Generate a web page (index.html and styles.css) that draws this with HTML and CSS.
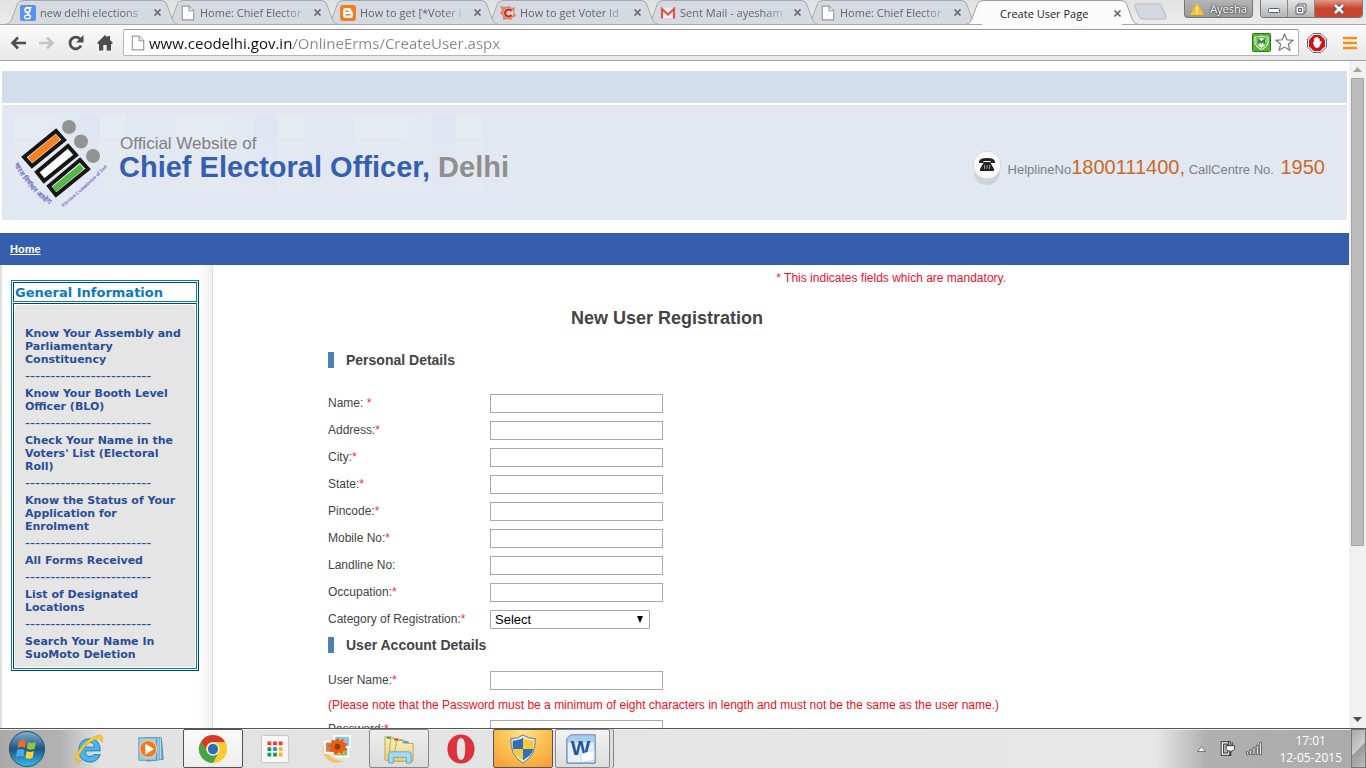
FILE: index.html
```html
<!DOCTYPE html>
<html lang="en">
<head>
    <meta charset="UTF-8">
    <meta name="viewport" content="width=device-width, initial-scale=1.0">
    <title>Create User Page</title>
    <link rel="stylesheet" href="styles.css">
</head>
<body>

    <!-- shared shapes -->
    <svg class="defs" aria-hidden="true">
        <symbol id="edge" viewBox="0 0 16 24">
            <path class="fill" d="M0 24C4 24 5 21 6.500 17L11 5C12 2 13 1 16 1V24Z"/>
            <path class="line" d="M0 24C4 24 5 21 6.500 17L11 5C12 2 13 1 16 1"/>
        </symbol>
        <symbol id="page" viewBox="0 0 12 14">
            <path d="M1 1H7L11 5V13H1Z" fill="#fff" stroke="#999"/>
            <path d="M7 1V5H11" fill="#eee" stroke="#999"/>
        </symbol>
        <symbol id="cross" viewBox="0 0 9 9">
            <path d="M1.500 1.500L7.500 7.500M7.500 1.500L1.500 7.500" stroke="#666" stroke-width="1.700" fill="none"/>
        </symbol>
        <linearGradient id="orbFill" x1="0" y1="0" x2="0" y2="1">
            <stop offset="0" stop-color="#7fb0cc"/><stop offset=".5" stop-color="#1d5584"/><stop offset="1" stop-color="#35c0ee"/>
        </linearGradient>
        <linearGradient id="folder" x1="0" y1="0" x2="0" y2="1">
            <stop offset="0" stop-color="#fbf0b8"/><stop offset="1" stop-color="#e8cc72"/>
        </linearGradient>
    </svg>

    <div class="tabstrip">
        <div class="tab">
            <svg class="edge"><use href="#edge"/></svg>
            <div class="tab-body">
                <svg class="favicon" viewBox="0 0 16 16"><rect width="16" height="16" rx="2" fill="#5a92f0"/><circle cx="7.500" cy="5" r="2.400" fill="none" stroke="#fff" stroke-width="1.600"/><path d="M9 3L11.500 2.500M8 7.500C6 9 10.500 9 10.500 11.500C10.500 14.500 4.500 14.500 4.500 12C4.500 10 8 10 9 10" fill="none" stroke="#fff" stroke-width="1.400"/></svg>
                <span>new delhi elections</span>
                <button aria-label="Close tab"><svg><use href="#cross"/></svg></button>
            </div>
            <svg class="edge right"><use href="#edge"/></svg>
        </div>
        <div class="tab">
            <svg class="edge"><use href="#edge"/></svg>
            <div class="tab-body">
                <svg class="favicon"><use href="#page"/></svg>
                <span>Home: Chief Elector</span>
                <button aria-label="Close tab"><svg><use href="#cross"/></svg></button>
            </div>
            <svg class="edge right"><use href="#edge"/></svg>
        </div>
        <div class="tab">
            <svg class="edge"><use href="#edge"/></svg>
            <div class="tab-body">
                <svg class="favicon" viewBox="0 0 16 16"><rect width="16" height="16" rx="3" fill="#f57d20"/><path d="M6 3H8.500A3 3 0 0 1 11.500 6C11.500 7 13 6.500 13 8V10A3 3 0 0 1 10 13H6A3 3 0 0 1 3 10V6A3 3 0 0 1 6 3Z" fill="#fff"/><path d="M6 6.200H8.300M6 9.800H10" stroke="#f57d20" stroke-width="1.500" stroke-linecap="round"/></svg>
                <span>How to get [*Voter i</span>
                <button aria-label="Close tab"><svg><use href="#cross"/></svg></button>
            </div>
            <svg class="edge right"><use href="#edge"/></svg>
        </div>
        <div class="tab">
            <svg class="edge"><use href="#edge"/></svg>
            <div class="tab-body">
                <svg class="favicon" viewBox="0 0 16 16"><path d="M0 1L5 2L9 1L12 3L15 2L14 7L16 11L12 13L11 15L7 14L3 15L3 11L0 8L2 5Z" fill="#cf8a68"/><circle cx="8.500" cy="8" r="5" fill="#f3cfc4"/><path d="M11.500 6A3.500 3.500 0 1 0 11.500 10" fill="none" stroke="#d4202c" stroke-width="2.200"/></svg>
                <span>How to get Voter Id</span>
                <button aria-label="Close tab"><svg><use href="#cross"/></svg></button>
            </div>
            <svg class="edge right"><use href="#edge"/></svg>
        </div>
        <div class="tab">
            <svg class="edge"><use href="#edge"/></svg>
            <div class="tab-body">
                <svg class="favicon" viewBox="0 0 16 16"><path d="M1 3H15V13H1Z" fill="#f4eeee"/><path d="M2 13.500V4L8 9.500L14 4V13.500" fill="none" stroke="#d9574c" stroke-width="2.200"/></svg>
                <span>Sent Mail - ayesham</span>
                <button aria-label="Close tab"><svg><use href="#cross"/></svg></button>
            </div>
            <svg class="edge right"><use href="#edge"/></svg>
        </div>
        <div class="tab">
            <svg class="edge"><use href="#edge"/></svg>
            <div class="tab-body">
                <svg class="favicon"><use href="#page"/></svg>
                <span>Home: Chief Elector</span>
                <button aria-label="Close tab"><svg><use href="#cross"/></svg></button>
            </div>
            <svg class="edge right"><use href="#edge"/></svg>
        </div>
        <div class="tab active">
            <svg class="edge"><use href="#edge"/></svg>
            <div class="tab-body">
                <i class="favicon"></i>
                <span>Create User Page</span>
                <button aria-label="Close tab"><svg><use href="#cross"/></svg></button>
            </div>
            <svg class="edge right"><use href="#edge"/></svg>
        </div>
        <button class="new-tab" aria-label="New tab"><svg viewBox="0 0 34 18"><path d="M4 1H24Q27 1 28 4L32 14Q33 16 30 16H9Q6 16 5 13L1 4Q0 1 4 1Z" fill="#d3d9e2" stroke="#b4b8be"/></svg></button>
        <div class="window-buttons">
            <button class="user"><svg viewBox="0 0 14 12"><path d="M7 0L14 12H0Z" fill="#fcc419"/><path d="M7 4V8M7 9V10.500" stroke="#fff" stroke-width="1.500"/></svg>Ayesha</button>
            <div class="controls">
                <button aria-label="Minimize"><svg viewBox="0 0 14 12"><rect x="1.500" y="5.500" width="11" height="4" rx="1" fill="#fff" stroke="#555a70"/></svg></button>
                <button aria-label="Restore"><svg viewBox="0 0 14 12"><path d="M4 1H12V9H4Z" fill="#fff" stroke="#555a70"/><path d="M2 3H10V11H2Z" fill="#fff" stroke="#555a70"/><path d="M4.500 5.500H7.500V8.500H4.500Z" fill="#ddd" stroke="#555a70"/></svg></button>
                <button class="close" aria-label="Close"><svg viewBox="0 0 14 12"><path d="M3 2L11 10M11 2L3 10" stroke="#5a4a56" stroke-width="4.500"/><path d="M3 2L11 10M11 2L3 10" stroke="#fff" stroke-width="2.500"/></svg></button>
            </div>
        </div>
    </div>

    <div class="toolbar">
        <button aria-label="Back"><svg viewBox="0 0 16 16"><path d="M16 8H3M8 2.500L2.500 8L8 13.500" fill="none" stroke="#4d4d4d" stroke-width="2.600"/></svg></button>
        <button aria-label="Forward"><svg viewBox="0 0 16 16"><path d="M0 8H13M8 2.500L13.500 8L8 13.500" fill="none" stroke="#c4c4c4" stroke-width="2.600"/></svg></button>
        <button aria-label="Reload"><svg viewBox="0 0 16 16"><path d="M13 10.500A5.800 5.800 0 1 1 12 4" fill="none" stroke="#4d4d4d" stroke-width="2.800"/><path d="M15.500 0V7.500H8Z" fill="#4d4d4d"/></svg></button>
        <button aria-label="Home"><svg viewBox="0 0 16 16"><path d="M8 0L10.500 2.500V1H13V5L16 8L14.500 9.300L14 8.900V15.500H9.700V10H6.300V15.500H2V8.900L1.500 9.300L0 8Z" fill="#4d4d4d"/></svg></button>
        <div class="omnibox">
            <svg class="page-icon"><use href="#page"/></svg>
            <input type="text" aria-label="Address" value="www.ceodelhi.gov.in/OnlineErms/CreateUser.aspx">
            <svg class="badge" viewBox="0 0 19 19"><rect x=".5" y=".5" width="18" height="18" rx="1" fill="#53b727" stroke="#237a20"/><path d="M2.500 3.500Q7 4 9.500 2.500Q12 4 16.500 3.500V10Q15 14.500 9.500 17Q4 14.500 2.500 10Z" fill="#fff"/><path d="M4 5Q7 5.200 9.500 4Q12 5.200 15 5V10Q14 13.500 9.500 15.500Q5 13.500 4 10Z" fill="#e4f3dc" stroke="#3a9a2b"/><path d="M6.500 11.500V7L9.500 9.500L12.500 7V11.500" fill="none" stroke="#2b8a22" stroke-width="2"/></svg>
            <svg class="badge" viewBox="0 0 19 19"><path d="M9.500 1.200L11.900 6.800L18 7.300L13.400 11.300L14.800 17.300L9.500 14.100L4.200 17.300L5.600 11.300L1 7.300L7.100 6.800Z" fill="#fff" stroke="#777" stroke-width="1.200"/></svg>
        </div>
        <button class="stop" aria-label="Ad blocker"><svg viewBox="0 0 20 20"><path d="M6 .5H14L19.500 6V14L14 19.500H6L.5 14V6Z" fill="#fff" stroke="#666"/><path d="M6.700 2H13.300L18 6.700V13.300L13.300 18H6.700L2 13.300V6.700Z" fill="#d6101a"/><path d="M6 9Q6 8 7 9V5.500Q7.600 4.500 8.200 5.500V4.500Q9 3.500 9.800 4.500Q10.600 3.700 11.300 4.800V5.800Q12.500 5 12.800 6.500V9Q14 7.500 14.800 8.500L12.500 13.500Q11.500 15 9.500 15Q6.500 14 6 9Z" fill="#fff"/></svg></button>
        <button class="menu" aria-label="Menu"><svg viewBox="0 0 14 14"><path d="M0 2H14M0 7H14M0 12H14" stroke="#f0911e" stroke-width="2.600"/></svg></button>
    </div>

    <div class="viewport">
        <div class="site">
            <div class="top-band"></div>
            <header>
                <div class="brand">
                    <svg class="emblem" viewBox="0 0 94 90">
                        <g fill="#939393"><circle cx="56" cy="9" r="7"/><circle cx="68" cy="23.500" r="7"/><circle cx="80" cy="38" r="7"/></g>
                        <g stroke="#151515" stroke-width="4">
                            <path d="M11 39L43 13L51 22L19 48Z" fill="#fff"/>
                            <path d="M24 54L55 28L63 37L31 63Z" fill="#fff"/>
                            <path d="M36 68L67 42L75 51L43 77Z" fill="#fff"/>
                        </g>
                        <path d="M15 39L43 16L47 22L19 45Z" fill="#f58220"/>
                        <path d="M39 69L67 46L71 51L43 74Z" fill="#4fb848"/>
                        <defs>
                            <path id="leftText" d="M1 46Q14 72 38 88"/>
                            <path id="rightText" d="M50 89Q70 73 93 50"/>
                        </defs>
                        <g class="emblem-text"><text class="hindi"><textPath href="#leftText">भारत निर्वाचन आयोग</textPath></text>
                        <text><textPath href="#rightText">Election Commission of India</textPath></text></g>
                    </svg>
                    <div class="brand-text">
                        <p>Official Website of</p>
                        <h1>Chief Electoral Officer, <span>Delhi</span></h1>
                    </div>
                </div>
                <div class="helpline">
                    <svg viewBox="0 0 30 36"><ellipse cx="15" cy="22" rx="13" ry="13" fill="#cfd2d6"/><circle cx="15" cy="15" r="14" fill="#f8f8f8" stroke="#d3d5d8"/><path d="M7 12Q7 8 15 8Q23 8 23 12V13H18.500V11H11.500V13H7Z" fill="#222"/><path d="M12 12H18L22 19V21H8V19Z" fill="#222"/><path d="M12.500 15V19M15 15V19M17.500 15V19" stroke="#999"/></svg>
                    <p>HelplineNo<b>1800111400,</b> CallCentre No. <b class="last">1950</b></p>
                </div>
            </header>
            <nav><a href="#">Home</a></nav>

            <div class="columns">
                <aside>
                    <div class="info-box">
                        <h2>General Information</h2>
                        <div class="info-cell">
                            <ul>
                                <li><a href="#">Know Your Assembly and Parliamentary Constituency</a></li>
                                <li class="dash">-------------------------</li>
                                <li><a href="#">Know Your Booth Level Officer (BLO)</a></li>
                                <li class="dash">-------------------------</li>
                                <li><a href="#">Check Your Name in the Voters' List (Electoral Roll)</a></li>
                                <li class="dash">-------------------------</li>
                                <li><a href="#">Know the Status of Your Application for Enrolment</a></li>
                                <li class="dash">-------------------------</li>
                                <li><a href="#">All Forms Received</a></li>
                                <li class="dash">-------------------------</li>
                                <li><a href="#">List of Designated Locations</a></li>
                                <li class="dash">-------------------------</li>
                                <li><a href="#">Search Your Name In SuoMoto Deletion</a></li>
                            </ul>
                        </div>
                    </div>
                </aside>

                <main>
                    <form>
                        <p class="mandatory"><em>*</em> This indicates fields which are mandatory.</p>
                        <h2>New User Registration</h2>
                        <h3>Personal Details</h3>
                        <div class="fields">
                            <label for="name">Name: <em>*</em></label><input type="text" id="name">
                            <label for="address">Address:<em>*</em></label><input type="text" id="address">
                            <label for="city">City:<em>*</em></label><input type="text" id="city">
                            <label for="state">State:<em>*</em></label><input type="text" id="state">
                            <label for="pincode">Pincode:<em>*</em></label><input type="text" id="pincode">
                            <label for="mobile">Mobile No:<em>*</em></label><input type="text" id="mobile">
                            <label for="landline">Landline No:</label><input type="text" id="landline">
                            <label for="occupation">Occupation:<em>*</em></label><input type="text" id="occupation">
                            <label for="category">Category of Registration:<em>*</em></label>
                            <select id="category"><option>Select</option></select>
                        </div>
                        <h3 class="account">User Account Details</h3>
                        <div class="fields">
                            <label for="username">User Name:<em>*</em></label><input type="text" id="username">
                        </div>
                        <p class="note">(Please note that the Password must be a minimum of eight characters in length and must not be the same as the user name.)</p>
                        <div class="fields">
                            <label for="password">Password:<em>*</em></label><input type="password" id="password">
                        </div>
                    </form>
                </main>
            </div>
        </div>
        <div class="scrollbar">
            <svg viewBox="0 0 9 5"><path d="M4.500 0L9 5H0Z" fill="#a3a3a3"/></svg>
            <div class="track"><div class="thumb"></div></div>
            <svg viewBox="0 0 9 5"><path d="M0 0H9L4.500 5Z" fill="#505050"/></svg>
        </div>
    </div>

    <footer class="taskbar">
        <button class="start" aria-label="Start"><svg viewBox="0 0 38 38"><circle cx="19" cy="19" r="17.500" fill="url(#orbFill)" stroke="#254e6a"/><path d="M11 11Q14 9 18 11L17 18Q13 16 9.500 18Z" fill="#ee6a2c"/><path d="M20 12Q24 14 28 12L26.500 19Q23 20.500 18.800 18.800Z" fill="#91c83e"/><path d="M9 20Q13 18 16.500 20L15.500 27Q12 25 8 27Z" fill="#4ea8e8"/><path d="M18.500 21Q22 23 26 21L24.500 28Q21 29.500 17.500 28Z" fill="#fcd02f"/></svg></button>
        <button aria-label="Internet Explorer"><svg viewBox="0 0 32 32"><path d="M28 18H12Q12 24 17 24Q20 24 21 22H28Q25 30 17 30Q5 29 5 17Q6 5 17 5Q28 5 28 18ZM12 14H22Q21 9 17 9Q13 9 12 14Z" fill="#4ab6ec" stroke="#2279b8" fill-rule="evenodd"/><path d="M4 31Q-3 27 7 15Q17 2 28 1Q32 2 30 9Q28 3 20 7Q9 13 4 26Q3 30 8 28Q6 31 4 31Z" fill="#fbc82b" stroke="#d69c14" stroke-width=".5"/></svg></button>
        <button aria-label="Media Player"><svg viewBox="0 0 32 32"><path d="M10 4H27L29 27L12 29Z" fill="#76aed0" stroke="#4a85ac"/><path d="M23.500 4V28M26 4V27" stroke="#c5e3f3"/><path d="M3 4H22V28H3Z" fill="#9fcbe3" stroke="#5c97bc"/><circle cx="13" cy="16" r="9" fill="#f27a1c" stroke="#fbd4b0"/><path d="M10 10V22L19 16Z" fill="#fff"/></svg></button>
        <button class="open" aria-label="Chrome"><svg viewBox="0 0 32 32"><circle cx="16" cy="16" r="15" fill="#fbca2d"/><path d="M3 8.500A15 15 0 0 1 29 8.500H16A7 7 0 0 0 10 19.500Z" fill="#d63a2c"/><path d="M3 8.500A15 15 0 0 0 16 31L22 19.500A7 7 0 0 1 10 19.500Z" fill="#45a447"/><circle cx="16" cy="16" r="7" fill="#f4f4f4"/><circle cx="16" cy="16" r="5.500" fill="#2e6fb8"/></svg></button>
        <button aria-label="App Launcher"><svg viewBox="0 0 32 32"><rect x="1.500" y="1.500" width="29" height="29" rx="2" fill="#f7f7f7" stroke="#c2c2c2"/><path d="M8 8h4v4h-4zM14 8h4v4h-4zM20 8h4v4h-4z" fill="#e8402f"/><path d="M8 14h4v4h-4zM8 20h4v4h-4zM14 20h4v4h-4z" fill="#119a57"/><path d="M14 14h4v4h-4z" fill="#3280e8"/><path d="M20 14h4v4h-4zM20 20h4v4h-4z" fill="#fbb416"/></svg></button>
        <button aria-label="Photo Gallery"><svg viewBox="0 0 32 32"><path d="M3 9Q-3 20 7 28Q15 33 23 29Q10 28 5 19Q3 13 6 8Z" fill="#f6c168"/><path d="M13 2H30V14H13Z" fill="#8fc3e8" stroke="#fff" stroke-width="2"/><path d="M14 14H28V24H14Z" fill="#8fbf62" stroke="#fff" stroke-width="2"/><path d="M3 8H22V20H3Z" fill="#b98a62" stroke="#fff" stroke-width="2"/><path d="M17 4L19 7L23 5L23 9L27 10L25 14L27 17L23 18L22 22L18 20L14 23L12 19L8 19L9 15L6 12L10 10L10 6L14 7Z" fill="#e85f12"/><circle cx="16.500" cy="13.500" r="3" fill="#8e3811"/></svg></button>
        <button class="open dim" aria-label="Explorer"><svg viewBox="0 0 32 32"><path d="M1 3H9L11 6H20V28H1Z" fill="url(#folder)" stroke="#bea55a"/><path d="M7 5H16L18 8H26V29H5Z" fill="url(#folder)" stroke="#bea55a"/><path d="M14 7H22L24 10H31V29H9Z" fill="url(#folder)" stroke="#bea55a"/><path d="M3 4H7" stroke="#35a13f" stroke-width="2"/><path d="M11 6H15" stroke="#ce4026" stroke-width="2"/><path d="M20 9H25" stroke="#359bd8" stroke-width="2"/><path d="M5 21Q5 19 8 19H26Q29 19 29 21V31H24V25H10V31H5Z" fill="#a6d8ef" stroke="#5fa7ca"/></svg></button>
        <button aria-label="Opera"><svg viewBox="0 0 32 32"><path d="M16 1C25 1 30 8 30 16S25 31 16 31S2 24 2 16S7 1 16 1ZM16 4C12 4 11 10 11 16S12 28 16 28S21 22 21 16S20 4 16 4Z" fill="#e2313c" stroke="#ad1d29" stroke-width=".7" fill-rule="evenodd"/></svg></button>
        <button class="open alert" aria-label="Security"><svg viewBox="0 0 32 32"><path d="M16 1Q21 5 29 5Q30 23 16 31Q2 23 3 5Q11 5 16 1Z" fill="#e6e9ec" stroke="#67727a"/><path d="M16 4V16H5V7Q12 7 16 4Z" fill="#2d70b7"/><path d="M16 4Q20 7 27 7V16H16Z" fill="#f6cb37"/><path d="M5 16H16V28Q6 22 5 16Z" fill="#f6cb37"/><path d="M16 16H27Q26 22 16 28Z" fill="#2d70b7"/></svg></button>
        <button class="open stacked" aria-label="Word"><svg viewBox="0 0 32 32"><path d="M5 1H31V31H1V5Z" fill="#e6f1fb" stroke="#2d60aa"/><path d="M5 2H30V9H2V5Z" fill="#a8ceed"/><text class="word-mark" x="5" y="22">W</text><path d="M15 22L30 17V28L17 30Z" fill="#fff" stroke="#cbd8e8"/></svg></button>
        <div class="tray">
            <svg class="up" viewBox="0 0 9 6"><path d="M4.500 .5L8.500 5.500H.5Z" fill="#fff" stroke="#777"/></svg>
            <svg class="power" viewBox="0 0 16 16"><path d="M2 2H9V14H2Z" fill="#b5b5b5" stroke="#333" stroke-width="3.500"/><path d="M2 2H9V14H2Z" fill="none" stroke="#fff" stroke-width="1.500"/><path d="M8.500 1V5M12.500 1V5M6 5H15V8Q14 11 10.500 11Q7 11 6 8Z" fill="#fff" stroke="#333"/><path d="M10.500 11V16" stroke="#333" stroke-width="2"/></svg>
            <svg class="signal" viewBox="0 0 17 14"><path d="M.5 10.500h2v3h-2zM4 8.500h2v5h-2zM7.500 6h2v7.500h-2zM11 3.500h2v10h-2zM14.500 .5h2v13h-2z" fill="#fff" stroke="#444" stroke-width=".8"/></svg>
            <div class="clock"><span>17:01</span><span>12-05-2015</span></div>
        </div>
        <button class="show-desktop" aria-label="Show desktop"></button>
    </footer>

</body>
</html>
```
FILE: styles.css
```css
/* styles.css */
* {
    box-sizing: border-box;
}

body {
    font-family: "Liberation Sans", Arial, sans-serif;
    font-size: 12px;
    color: #444;
    margin: 0;
    height: 100vh;
    display: flex;
    flex-direction: column;
    overflow: hidden;
    background-color: white;
}

h1, h2, h3, p, ul {
    margin: 0;
    padding: 0;
}

button {
    border: none;
    padding: 0;
    background: none;
    font-family: inherit;
    display: flex;
    align-items: center;
    justify-content: center;
}

svg {
    display: block;
    flex-shrink: 0;
}

.defs {
    position: absolute;
    width: 0;
    height: 0;
}

/* Browser tabs */
.tabstrip {
    display: flex;
    height: 25px;
    flex-shrink: 0;
    padding-left: 6px;
    background: linear-gradient(#e2e2e2, #ebebeb);
    border-bottom: 1px solid #a8a8a8;
    font-family: "Open Sans", sans-serif;
}

.tab {
    display: flex;
    width: 172px;
    height: 24px;
    margin-right: -12px;
    color: #666;
    --tab-color: #d5d9e1;
    --tab-line: #a6a9ad;
}

.tab.active {
    --tab-color: #fbfbfb;
    --tab-line: #a0a0a0;
    color: #222;
    height: 25px;
    margin-bottom: -1px;
    z-index: 1;
}

.edge {
    width: 16px;
    height: 24px;
    fill: none;
}

#edge .fill {
    fill: var(--tab-color);
}

#edge .line {
    stroke: var(--tab-line);
    fill: none;
}

.edge.right {
    transform: scaleX(-1);
}

.tab-body {
    flex: 1;
    min-width: 0;
    display: flex;
    align-items: center;
    background-color: var(--tab-color);
    border-top: 1px solid var(--tab-line);
}

.favicon {
    width: 16px;
    height: 16px;
    margin-left: -2px;
    margin-right: 4px;
    flex-shrink: 0;
}

.tab-body span {
    flex: 1;
    white-space: nowrap;
    font-size: 11px;
    -webkit-mask-image: linear-gradient(to right, #000 80%, rgba(0, 0, 0, 0.2));
    mask-image: linear-gradient(to right, #000 80%, rgba(0, 0, 0, 0.2));
}

.tab.active span {
    -webkit-mask-image: none;
    mask-image: none;
}

.tab-body button {
    margin-left: 8px;
}

.tab-body button svg {
    width: 9px;
    height: 9px;
}

.new-tab {
    margin: 0 0 0 8px;
}

.new-tab svg {
    width: 34px;
    height: 18px;
}

.window-buttons {
    display: flex;
    margin-left: auto;
    margin-right: 3px;
    gap: 7px;
    height: 18px;
}

.user {
    width: 69px;
    gap: 6px;
    font-size: 11px;
    color: white;
    text-shadow: 0 0 2px #333, 0 0 2px #333;
    background: linear-gradient(#b5b5b5, #989898);
    border: 1px solid #777;
    border-top: none;
    border-radius: 0 0 4px 4px;
}

.user svg {
    width: 14px;
    height: 12px;
}

.controls {
    display: flex;
    border: 1px solid #777;
    border-top: none;
    border-radius: 0 0 4px 4px;
    overflow: hidden;
}

.controls button {
    width: 27px;
    background: linear-gradient(#e4e4e4, #b4b4b4);
    border-right: 1px solid #888;
}

.controls button.close {
    width: 47px;
    background: linear-gradient(#e19a89, #c8442c 50%, #c8452e);
    border-right: none;
}

.controls svg {
    width: 14px;
    height: 12px;
}

/* Toolbar */
.toolbar {
    display: flex;
    align-items: center;
    height: 36px;
    flex-shrink: 0;
    gap: 13px;
    padding: 0 9px 0 10px;
    background: linear-gradient(#fbfbfb, #e8e8e8);
    border-bottom: 1px solid #a0a0a0;
}

.toolbar button svg {
    width: 16px;
    height: 16px;
}

.omnibox {
    flex: 1;
    display: flex;
    align-items: center;
    gap: 4px;
    height: 27px;
    margin-right: -5px;
    margin-left: -3px;
    padding: 0 4px 0 7px;
    background-color: white;
    border: 1px solid #b5b5b5;
    border-top-color: #999;
    border-radius: 2px;
}

.page-icon {
    width: 14px;
    height: 16px;
}

.omnibox input {
    flex: 1;
    border: none;
    outline: none;
    padding: 0;
    font-family: "Open Sans", sans-serif;
    font-size: 15px;
    background: linear-gradient(to right, #111 144px, #888 144px);
    -webkit-background-clip: text;
    background-clip: text;
    color: transparent;
}

.badge {
    width: 19px;
    height: 19px;
}

.toolbar .stop {
    margin-right: 3px;
}

.toolbar .stop svg {
    width: 20px;
    height: 20px;
}

.toolbar .menu svg {
    width: 14px;
    height: 14px;
}

/* Web page */
.viewport {
    flex: 1;
    min-height: 0;
    display: flex;
}

.site {
    flex: 1;
    display: flex;
    flex-direction: column;
    overflow: hidden;
    padding-top: 10px;
}

.top-band {
    height: 32px;
    flex-shrink: 0;
    margin: 0 2px 2px;
    background-color: #d2deec;
}

header {
    display: flex;
    justify-content: space-between;
    align-items: center;
    flex-shrink: 0;
    height: 115px;
    margin: 0 2px 13px;
    padding: 0 22px 0 11px;
    background-color: #e2e8f2;
}

.brand {
    display: flex;
    align-items: center;
    gap: 12px;
    width: 498px;
    height: 93px;
    background:
        linear-gradient(to bottom, transparent 24%, rgba(226, 232, 242, 0.5) 24% 80%, #e1e8f3 80%),
        repeating-linear-gradient(to right, #e5ebf1 0 27px, #e1e8f2 63px, #dfe6f3 63px 87px, #e6ebf1 87px 113px, #e1e8f2 113px 164px, #e6ebf1 164px 178px);
}

.emblem {
    width: 94px;
    height: 90px;
}

.emblem-text {
    font-family: "Liberation Serif", serif;
    font-size: 5px;
    font-weight: bold;
    fill: #6f6fc4;
}

.emblem-text .hindi {
    font-size: 7px;
}

.brand-text {
    padding-bottom: 9px;
}

.brand-text p {
    font-size: 17px;
    line-height: 18px;
    color: #808080;
    padding-left: 1px;
}

.brand-text h1 {
    font-size: 29px;
    line-height: 28px;
    color: #365fb0;
    white-space: nowrap;
}

.brand-text h1 span {
    color: #8f8f8f;
}

.helpline {
    display: flex;
    align-items: center;
    gap: 6px;
    padding-top: 11px;
    font-size: 13px;
    color: #808080;
}

.helpline svg {
    width: 30px;
    height: 36px;
}

.helpline b {
    font-size: 20px;
    font-weight: normal;
    color: #cc6a22;
}

.helpline p {
    line-height: 26px;
}

.helpline .last {
    margin-left: 3px;
}

nav {
    height: 32px;
    flex-shrink: 0;
    padding: 0 10px;
    line-height: 32px;
    background-color: #355eae;
}

nav a {
    color: white;
    font-size: 11px;
    font-weight: bold;
}

.columns {
    display: flex;
    flex: 1;
    min-height: 0;
}

aside {
    width: 213px;
    flex-shrink: 0;
    padding: 15px 12px 0 9px;
    border-left: 2px solid #e0e0e0;
    border-right: 1px solid #ddd;
    background: linear-gradient(to left, #f0f0f0, white 14px);
}

.info-box {
    font-family: "DejaVu Sans", Verdana, sans-serif;
    border: 1px solid;
    border-color: #0080c0 #00476b #00476b #0080c0;
    padding: 1px;
    background-color: white;
    display: flex;
    flex-direction: column;
    gap: 1px;
    margin-right: 1px;
}

.info-box h2, .info-cell {
    border: 1px solid;
    border-color: #00476b #0080c0 #0080c0 #00476b;
    padding: 1px;
}

.info-box h2 {
    padding: 2px 1px 0;
    font-size: 13px;
    line-height: 16px;
    color: #0a7abf;
    white-space: nowrap;
}

.info-box ul {
    list-style: none;
    padding: 22px 13px 6px 10px;
    border-radius: 3px;
    background-color: #e5e5e5;
}

.info-box li {
    line-height: 13px;
}

.info-box a {
    font-size: 11px;
    font-weight: bold;
    color: #2a4d98;
    text-decoration: none;
}

.info-box .dash {
    margin: 4px 0;
    font-size: 14px;
    color: #2a4d98;
}

/* Registration form */
main {
    flex: 1;
    padding: 5px 20px 0 115px;
}

form {
    max-width: 678px;
}

em {
    font-style: normal;
    color: #f8253c;
}

.mandatory {
    text-align: right;
    line-height: 16px;
    color: #f01030;
}

form h2 {
    margin-top: 20px;
    font-size: 18px;
    line-height: 24px;
    text-align: center;
}

form h3 {
    margin: 22px 0 26px;
    padding-left: 12px;
    border-left: 6px solid #4f81b0;
    font-size: 14px;
    line-height: 16px;
}

form h3.account {
    margin: 8px 0 18px;
}

.fields {
    display: grid;
    grid-template-columns: 162px 1fr;
    row-gap: 8px;
    align-items: center;
    justify-items: start;
}

.fields label {
    padding-bottom: 2px;
}

.fields input {
    width: 173px;
    height: 19px;
    border: 1px solid #a9a9a9;
    padding: 1px;
}

.fields select {
    width: 160px;
    height: 19px;
    padding: 0 4px;
    appearance: none;
    border: 1px solid #a9a9a9;
    border-radius: 1px;
    font-family: inherit;
    font-size: 13px;
    color: black;
    background: white url("data:image/svg+xml,%3Csvg xmlns='http://www.w3.org/2000/svg' width='8' height='7'%3E%3Cpath d='M1 0H7L4 7Z'/%3E%3C/svg%3E") no-repeat right 5px center;
}

.note {
    margin: 7px 0;
    line-height: 16px;
    color: #f00f1a;
    white-space: nowrap;
}

/* Scrollbar */
.scrollbar {
    width: 17px;
    display: flex;
    flex-direction: column;
    align-items: center;
    padding: 6px 0;
    gap: 6px;
    background-color: #f1f1f1;
}

.scrollbar svg {
    width: 9px;
    height: 5px;
}

.track {
    flex: 1;
}

.thumb {
    width: 13px;
    height: 74%;
    background-color: #bcbcbc;
    border: 1px solid #a5a5a5;
}

/* Taskbar */
.taskbar {
    display: flex;
    height: 40px;
    flex-shrink: 0;
    gap: 2px;
    border-top: 1px solid #555;
    background: linear-gradient(to right, #a9a9a9, #b2b2b2 60px, #e2e2e2 100px, #e7e7e7 calc(100% - 210px), #b0b0b0 calc(100% - 160px), #aaa);
    box-shadow: inset 0 1px #f0f0f0;
}

.taskbar button {
    width: 60px;
}

.taskbar button svg {
    width: 30px;
    height: 30px;
}

.taskbar .start {
    width: 57px;
    padding-right: 4px;
}

.taskbar .start svg {
    width: 38px;
    height: 38px;
}

.taskbar .open {
    border: 1px solid #555;
    border-radius: 2px;
    background: linear-gradient(#fafafa, #ededed);
}

.taskbar .open.dim {
    border-color: #888;
    background: linear-gradient(#eee, #dcdcdc);
}

.taskbar .open.alert {
    background: radial-gradient(circle at 50% 0, #fde38c, #fbbb4a 60%, #f79640);
}

.taskbar .open.stacked {
    width: 55px;
    margin-right: 4px;
    padding-right: 4px;
    border-color: #888;
    background: linear-gradient(#f2f2f2, #dcdcdc);
    box-shadow: 3px 0 #ddd, 4px 0 #888;
}

.word-mark {
    font-family: "Liberation Sans", Arial, sans-serif;
    font-size: 22px;
    font-weight: bold;
    fill: #1d53a4;
}

.tray {
    margin-left: auto;
    display: flex;
    align-items: center;
    gap: 10px;
}

.up {
    width: 9px;
    height: 6px;
}

.power, .signal {
    width: 16px;
    height: 15px;
}

.power {
    margin-left: 4px;
}

.clock {
    display: flex;
    flex-direction: column;
    align-items: center;
    margin: 0 7px;
    font-family: "Open Sans", sans-serif;
    font-size: 12px;
    line-height: 17px;
    color: white;
}

.taskbar .show-desktop {
    width: 15px;
    border: 1px solid #777;
    background: linear-gradient(135deg, #aaa, #ccc 50%, #999 51%, #bbb);
}
```
